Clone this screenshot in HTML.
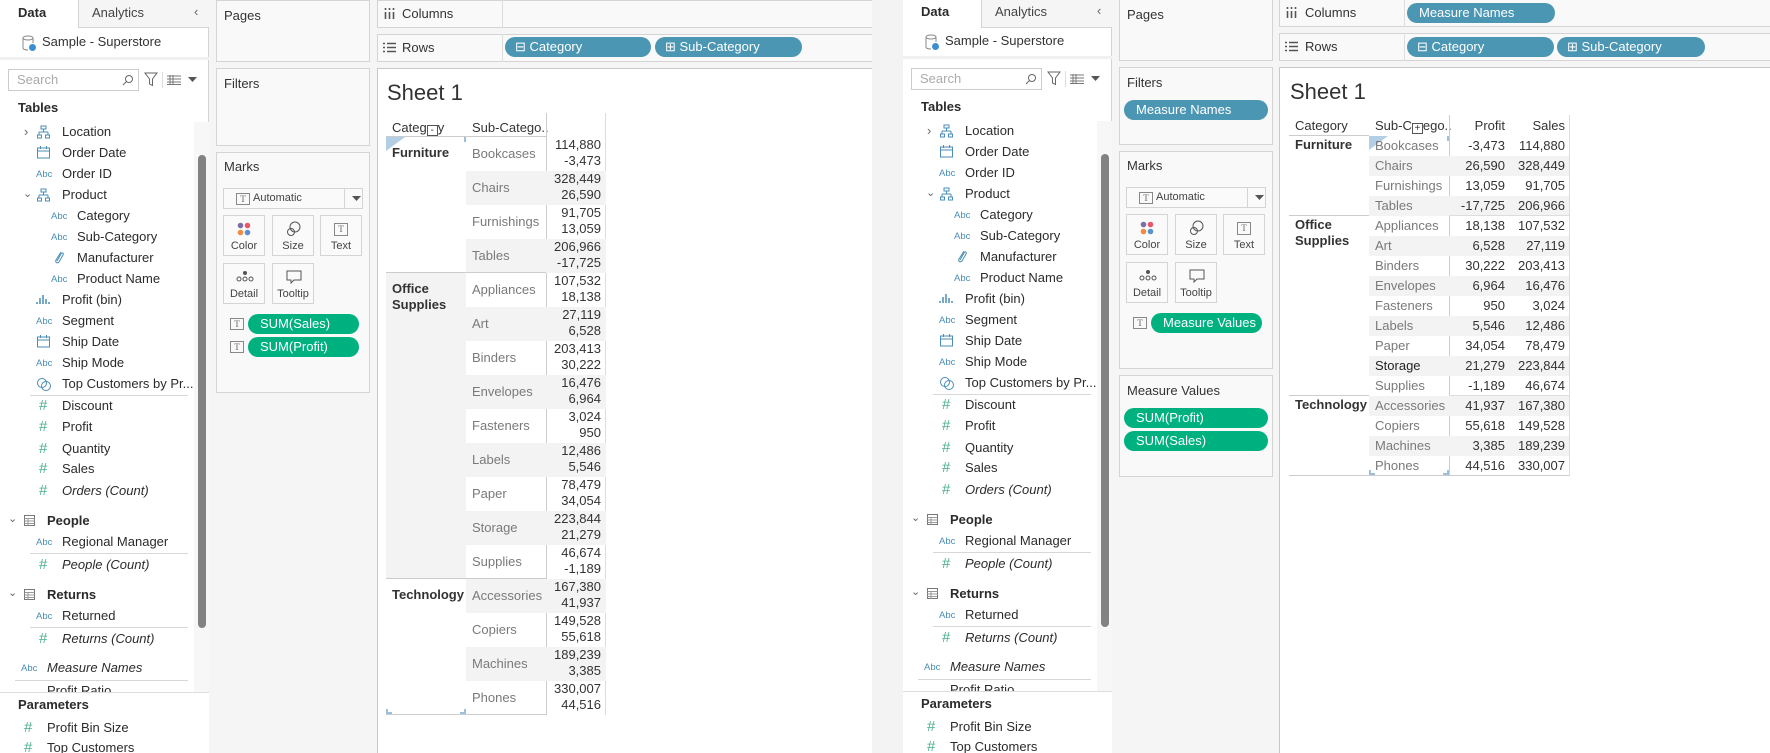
<!DOCTYPE html>
<html><head><meta charset="utf-8"><style>
*{margin:0;padding:0;box-sizing:border-box}
body{width:1770px;height:753px;overflow:hidden;background:#f3f3f3;font-family:"Liberation Sans",sans-serif;color:#2b2b2b;position:relative}
.half{position:absolute;top:0;height:753px;overflow:hidden;background:#f5f5f5}
.a{position:absolute;white-space:nowrap}
.t{position:absolute;white-space:nowrap;font-size:13px;line-height:16px}
.abc{position:absolute;font-size:9.5px;color:#4a8db5;line-height:12px}
.hash{position:absolute;font-size:15px;color:#4bb08c;line-height:16px;font-weight:normal}
.box{position:absolute;background:#f9f9f9;border:1px solid #d4d4d4}
.pill{position:absolute;border-radius:11px;color:#fff;font-size:13px;line-height:20px;padding-left:12px;white-space:nowrap}
.blue{background:#4b96b3}.green{background:#00b180}
.sep{position:absolute;height:1px;background:#d8d8d8}
.mb{position:absolute;width:42px;height:41px;border:1px solid #d4d4d4;background:#fafafa;font-size:11px;color:#444;text-align:center}
.mb span{position:absolute;left:0;right:0;top:24px}
.ti{position:absolute;width:14px;height:12px;border:1px solid #888;font-size:9px;line-height:10px;text-align:center;color:#666;font-family:"Liberation Serif",serif}
.g{position:absolute;background:#f3f3f3}
.sub{position:absolute;font-size:13px;color:#7a7a7a;white-space:nowrap;line-height:16px}
.v{position:absolute;font-size:13px;color:#333;text-align:right;width:70px;line-height:16px}
.cat{position:absolute;font-size:13px;font-weight:bold;color:#333;line-height:16px;white-space:nowrap}
.bx{display:inline-block;width:11px;height:11px;border:1px solid #555;font-size:10px;line-height:9px;text-align:center;vertical-align:-1px}
.auto{position:absolute;font-size:11px;color:#444;line-height:21px}
</style></head><body>

<!-- ================= LEFT HALF ================= -->
<div class="half" style="left:0;width:872px">
 <div class="a" style="left:0;top:0;width:209px;height:753px;background:#fff;border-right:1px solid #d4d4d4"></div>
 <div class="a" style="left:78px;top:0;width:131px;height:28px;background:#f5f5f5;border-left:1px solid #d4d4d4;border-bottom:1px solid #d4d4d4"></div>
 <div class="t" style="left:18px;top:5px;font-weight:bold">Data</div>
 <div class="t" style="left:92px;top:5px;color:#444">Analytics</div>
 <div class="t" style="left:194px;top:4px;color:#666">&#8249;</div>
 <svg class="a" style="left:21px;top:35px" width="16" height="17"><ellipse cx="7" cy="3" rx="5" ry="2" fill="none" stroke="#888"/><path d="M2 3v10c0 1.5 3 2 5 2M12 3v5" fill="none" stroke="#888"/><circle cx="11.5" cy="12.5" r="3.5" fill="#3b8fd0"/></svg>
 <div class="t" style="left:42px;top:34px;color:#333">Sample - Superstore</div>
 <div class="a" style="left:0;top:57px;width:209px;height:3px;background:#f0f0f0"></div>
 <div class="a" style="left:8px;top:69px;width:131px;height:22px;border:1px solid #ccc;background:#fff"></div>
 <div class="t" style="left:17px;top:72px;color:#aaa">Search</div>
 <svg class="a" style="left:122px;top:74px" width="12" height="12"><circle cx="7" cy="5" r="3.5" fill="none" stroke="#666"/><path d="M4.5 7.5L1 11" stroke="#666"/></svg>
 <svg class="a" style="left:144px;top:72px" width="14" height="15"><path d="M1 1h12L8.5 7v6.5L5.5 12V7z" fill="none" stroke="#666"/></svg>
 <div class="a" style="left:162px;top:72px;width:1px;height:16px;background:#ddd"></div>
 <svg class="a" style="left:167px;top:75px" width="14" height="10"><path d="M0 1h14M0 4h14M0 7h14M0 9.5h14M3 0v10M6 0v10" stroke="#777" stroke-width="1"/></svg>
 <svg class="a" style="left:188px;top:77px" width="9" height="5"><path d="M0 0h9L4.5 5z" fill="#555"/></svg>
 <div class="t" style="left:18px;top:100px;font-weight:bold">Tables</div>
 <div class="a" style="left:194px;top:122px;width:15px;height:570px;background:#f7f7f7"></div>
 <div class="a" style="left:198px;top:155px;width:8px;height:473px;border-radius:4px;background:#828282"></div>

 <div class="t" style="left:24px;top:124px;color:#666">›</div>
 <svg class="a" style="left:37px;top:125px" width="13" height="14"><rect x="4" y="1" width="5" height="3" fill="none" stroke="#4a8db5"/><path d="M6.5 4v3M2 7h9M2 7v3M11 7v3" stroke="#4a8db5" fill="none"/><rect x="0.5" y="10" width="4" height="3" fill="none" stroke="#4a8db5"/><rect x="8.5" y="10" width="4" height="3" fill="none" stroke="#4a8db5"/></svg>
 <div class="t" style="left:62px;top:124px">Location</div>
 <svg class="a" style="left:37px;top:146px" width="13" height="13"><rect x="0.5" y="2" width="12" height="10" fill="none" stroke="#4a8db5"/><path d="M0.5 5h12M3.5 0v3M9.5 0v3" stroke="#4a8db5"/></svg>
 <div class="t" style="left:62px;top:145px">Order Date</div>
 <div class="abc" style="left:36px;top:169px">Abc</div><div class="t" style="left:62px;top:166px">Order ID</div>
 <div class="t" style="left:23px;top:186px;color:#666;font-size:11px">&#8964;</div>
 <svg class="a" style="left:37px;top:188px" width="13" height="14"><rect x="4" y="1" width="5" height="3" fill="none" stroke="#4a8db5"/><path d="M6.5 4v3M2 7h9M2 7v3M11 7v3" stroke="#4a8db5" fill="none"/><rect x="0.5" y="10" width="4" height="3" fill="none" stroke="#4a8db5"/><rect x="8.5" y="10" width="4" height="3" fill="none" stroke="#4a8db5"/></svg>
 <div class="t" style="left:62px;top:187px">Product</div>
 <div class="abc" style="left:51px;top:211px">Abc</div><div class="t" style="left:77px;top:208px">Category</div>
 <div class="abc" style="left:51px;top:232px">Abc</div><div class="t" style="left:77px;top:229px">Sub-Category</div>
 <svg class="a" style="left:54px;top:250px" width="10" height="15"><path d="M7 2L2 10c-1 2 1 4 3 2l4-7c1-2-1-3-2-1L3 11" fill="none" stroke="#4a8db5"/></svg>
 <div class="t" style="left:77px;top:250px">Manufacturer</div>
 <div class="abc" style="left:51px;top:274px">Abc</div><div class="t" style="left:77px;top:271px">Product Name</div>
 <svg class="a" style="left:36px;top:294px" width="14" height="10"><path d="M1 8v2M4 4v6M7 1v9M10 5v5M13 8v2" stroke="#4a8db5" stroke-width="1.5"/></svg>
 <div class="t" style="left:62px;top:292px">Profit (bin)</div>
 <div class="abc" style="left:36px;top:316px">Abc</div><div class="t" style="left:62px;top:313px">Segment</div>
 <svg class="a" style="left:37px;top:335px" width="13" height="13"><rect x="0.5" y="2" width="12" height="10" fill="none" stroke="#4a8db5"/><path d="M0.5 5h12M3.5 0v3M9.5 0v3" stroke="#4a8db5"/></svg>
 <div class="t" style="left:62px;top:334px">Ship Date</div>
 <div class="abc" style="left:36px;top:358px">Abc</div><div class="t" style="left:62px;top:355px">Ship Mode</div>
 <svg class="a" style="left:36px;top:377px" width="16" height="14"><circle cx="6" cy="6" r="4.5" fill="none" stroke="#4a8db5"/><circle cx="10" cy="9" r="4.5" fill="none" stroke="#4a8db5"/></svg>
 <div class="t" style="left:62px;top:376px">Top Customers by Pr...</div>
 <div class="sep" style="left:30px;top:395px;width:158px"></div>
 <div class="hash" style="left:39px;top:398px">#</div><div class="t" style="left:62px;top:398px">Discount</div>
 <div class="hash" style="left:39px;top:419px">#</div><div class="t" style="left:62px;top:419px">Profit</div>
 <div class="hash" style="left:39px;top:441px">#</div><div class="t" style="left:62px;top:441px">Quantity</div>
 <div class="hash" style="left:39px;top:461px">#</div><div class="t" style="left:62px;top:461px">Sales</div>
 <div class="hash" style="left:39px;top:483px">#</div><div class="t" style="left:62px;top:483px;font-style:italic">Orders (Count)</div>
 <div class="t" style="left:8px;top:511px;color:#666;font-size:11px">&#8964;</div>
 <svg class="a" style="left:24px;top:515px" width="11" height="11"><rect x="0.5" y="0.5" width="10" height="10" fill="none" stroke="#777"/><path d="M0.5 3.5h10M0.5 6h10M0.5 8.5h10M4 3.5v7" stroke="#999"/></svg>
 <div class="t" style="left:47px;top:513px;font-weight:bold">People</div>
 <div class="abc" style="left:36px;top:537px">Abc</div><div class="t" style="left:62px;top:534px">Regional Manager</div>
 <div class="sep" style="left:30px;top:553px;width:158px"></div>
 <div class="hash" style="left:39px;top:557px">#</div><div class="t" style="left:62px;top:557px;font-style:italic">People (Count)</div>
 <div class="t" style="left:8px;top:585px;color:#666;font-size:11px">&#8964;</div>
 <svg class="a" style="left:24px;top:589px" width="11" height="11"><rect x="0.5" y="0.5" width="10" height="10" fill="none" stroke="#777"/><path d="M0.5 3.5h10M0.5 6h10M0.5 8.5h10M4 3.5v7" stroke="#999"/></svg>
 <div class="t" style="left:47px;top:587px;font-weight:bold">Returns</div>
 <div class="abc" style="left:36px;top:611px">Abc</div><div class="t" style="left:62px;top:608px">Returned</div>
 <div class="sep" style="left:30px;top:627px;width:158px"></div>
 <div class="hash" style="left:39px;top:631px">#</div><div class="t" style="left:62px;top:631px;font-style:italic">Returns (Count)</div>
 <div class="abc" style="left:21px;top:663px">Abc</div><div class="t" style="left:47px;top:660px;font-style:italic">Measure Names</div>
 <div class="sep" style="left:15px;top:680px;width:173px"></div>
 <div class="t" style="left:47px;top:683px">Profit Ratio</div>
 <div class="a" style="left:0;top:692px;width:209px;height:61px;background:#fff;border-top:1px solid #ddd"></div>
 <div class="t" style="left:18px;top:697px;font-weight:bold">Parameters</div>
 <div class="hash" style="left:24px;top:720px">#</div><div class="t" style="left:47px;top:720px">Profit Bin Size</div>
 <div class="hash" style="left:24px;top:740px">#</div><div class="t" style="left:47px;top:740px">Top Customers</div>

 <div class="box" style="left:216px;top:0;width:154px;height:62px"></div>
 <div class="t" style="left:224px;top:8px;color:#333">Pages</div>
 <div class="box" style="left:216px;top:68px;width:154px;height:78px"></div>
 <div class="t" style="left:224px;top:76px;color:#333">Filters</div>
 <div class="box" style="left:216px;top:152px;width:154px;height:241px"></div>
 <div class="t" style="left:224px;top:159px;color:#333">Marks</div>
 <div class="a" style="left:223px;top:188px;width:140px;height:21px;border:1px solid #d4d4d4;background:#fafafa"></div>
 <div class="a" style="left:344px;top:188px;width:1px;height:21px;background:#d4d4d4"></div>
 <svg class="a" style="left:352px;top:196px" width="9" height="5"><path d="M0 0h9L4.5 5z" fill="#555"/></svg>
 <div class="ti" style="left:236px;top:193px">T</div>
 <div class="auto" style="left:253px;top:188px">Automatic</div>
 <div class="mb" style="left:223px;top:215px"><svg style="position:absolute;left:13px;top:6px" width="14" height="14"><circle cx="3.5" cy="3.5" r="2.8" fill="#7b6ea6"/><circle cx="10.5" cy="3.5" r="2.8" fill="#e8566a"/><circle cx="3.5" cy="10.5" r="2.8" fill="#f08c40"/><circle cx="10.5" cy="10.5" r="2.8" fill="#5a8fd0"/></svg><span>Color</span></div>
 <div class="mb" style="left:272px;top:215px"><svg style="position:absolute;left:13px;top:5px" width="16" height="16"><circle cx="9" cy="6" r="5" fill="none" stroke="#555"/><circle cx="5" cy="11" r="3.5" fill="none" stroke="#555"/></svg><span>Size</span></div>
 <div class="mb" style="left:320px;top:215px"><div class="ti" style="left:13px;top:7px;width:14px;height:13px">T</div><span>Text</span></div>
 <div class="mb" style="left:223px;top:263px"><svg style="position:absolute;left:11px;top:6px" width="20" height="12"><circle cx="10" cy="3" r="2" fill="#555"/><circle cx="4" cy="9" r="2" fill="none" stroke="#555"/><circle cx="10" cy="9" r="2" fill="none" stroke="#555"/><circle cx="16" cy="9" r="2" fill="none" stroke="#555"/></svg><span>Detail</span></div>
 <div class="mb" style="left:272px;top:263px"><svg style="position:absolute;left:13px;top:6px" width="16" height="14"><path d="M1 1h14v9H8l-3 3v-3H1z" fill="none" stroke="#555"/></svg><span>Tooltip</span></div>
 <div class="ti" style="left:230px;top:318px">T</div>
 <div class="pill green" style="left:248px;top:314px;width:111px">SUM(Sales)</div>
 <div class="ti" style="left:230px;top:341px">T</div>
 <div class="pill green" style="left:248px;top:337px;width:111px">SUM(Profit)</div>

 <div class="box" style="left:377px;top:0;width:500px;height:28px"></div>
 <div class="a" style="left:502px;top:0;width:1px;height:28px;background:#ddd"></div>
 <svg class="a" style="left:384px;top:8px" width="11" height="11"><path d="M1.5 0v2M1.5 4v7M5.5 0v2M5.5 4v7M9.5 0v2M9.5 4v7" stroke="#555" stroke-width="1.6"/></svg>
 <div class="t" style="left:402px;top:6px;color:#333">Columns</div>
 <div class="box" style="left:377px;top:34px;width:500px;height:28px"></div>
 <div class="a" style="left:502px;top:34px;width:1px;height:28px;background:#ddd"></div>
 <svg class="a" style="left:383px;top:42px" width="13" height="11"><path d="M0 1.5h2M4 1.5h9M0 5.5h2M4 5.5h9M0 9.5h2M4 9.5h9" stroke="#555" stroke-width="1.4"/></svg>
 <div class="t" style="left:402px;top:40px;color:#333">Rows</div>
 <div class="pill blue" style="left:505px;top:37px;width:146px;padding-left:10px">&#8863; Category</div>
 <div class="pill blue" style="left:655px;top:37px;width:147px;padding-left:10px">&#8862; Sub-Category</div>

 <div class="a" style="left:377px;top:68px;width:500px;height:690px;background:#fff;border:1px solid #c8c8c8"></div>
 <div class="a" style="left:387px;top:80px;font-size:22px;color:#333">Sheet 1</div>
 <div class="cat" style="left:392px;top:120px;font-weight:normal">Categ<span class="bx">-</span>y</div>
 <div class="cat" style="left:472px;top:120px;font-weight:normal">Sub-Catego..</div>
 <div class="a" style="left:386px;top:136px;width:160px;height:1px;background:#ccc"></div>
 <div class="a" style="left:546px;top:113px;width:1px;height:602px;background:#ccc"></div>
 <div class="a" style="left:605px;top:113px;width:1px;height:602px;background:#ddd"></div>
 <div class="g" style="left:386px;top:273px;width:80px;height:306px"></div>
 <div class="g" style="left:466px;top:171px;width:140px;height:34px"></div>
 <div class="g" style="left:466px;top:239px;width:140px;height:34px"></div>
 <div class="g" style="left:466px;top:307px;width:140px;height:34px"></div>
 <div class="g" style="left:466px;top:375px;width:140px;height:34px"></div>
 <div class="g" style="left:466px;top:443px;width:140px;height:34px"></div>
 <div class="g" style="left:466px;top:511px;width:140px;height:34px"></div>
 <div class="g" style="left:466px;top:579px;width:140px;height:34px"></div>
 <div class="g" style="left:466px;top:647px;width:140px;height:34px"></div>
 <div class="a" style="left:386px;top:272px;width:160px;height:1px;background:#ccc"></div>
 <div class="a" style="left:386px;top:578px;width:160px;height:1px;background:#ccc"></div>
 <div class="a" style="left:386px;top:714px;width:160px;height:1px;background:#ccc"></div>
 <svg class="a" style="left:386px;top:137px" width="20" height="15"><path d="M0 0h19L0 14z" fill="#b3cfe6"/></svg>
 <div class="a" style="left:464px;top:137px;width:2px;height:5px;background:#9dbfdc"></div>
 <div class="a" style="left:386px;top:709px;width:2px;height:5px;background:#9dbfdc"></div><div class="a" style="left:386px;top:712px;width:6px;height:2px;background:#9dbfdc"></div>
 <div class="a" style="left:464px;top:709px;width:2px;height:5px;background:#9dbfdc"></div><div class="a" style="left:460px;top:712px;width:6px;height:2px;background:#9dbfdc"></div>
 <div class="cat" style="left:392px;top:145px">Furniture</div>
 <div class="cat" style="left:392px;top:281px">Office<br>Supplies</div>
 <div class="cat" style="left:392px;top:587px">Technology</div>
 <div class="sub" style="left:472px;top:146px">Bookcases</div><div class="v" style="left:531px;top:137px">114,880</div><div class="v" style="left:531px;top:153px">-3,473</div>
 <div class="sub" style="left:472px;top:180px">Chairs</div><div class="v" style="left:531px;top:171px">328,449</div><div class="v" style="left:531px;top:187px">26,590</div>
 <div class="sub" style="left:472px;top:214px">Furnishings</div><div class="v" style="left:531px;top:205px">91,705</div><div class="v" style="left:531px;top:221px">13,059</div>
 <div class="sub" style="left:472px;top:248px">Tables</div><div class="v" style="left:531px;top:239px">206,966</div><div class="v" style="left:531px;top:255px">-17,725</div>
 <div class="sub" style="left:472px;top:282px">Appliances</div><div class="v" style="left:531px;top:273px">107,532</div><div class="v" style="left:531px;top:289px">18,138</div>
 <div class="sub" style="left:472px;top:316px">Art</div><div class="v" style="left:531px;top:307px">27,119</div><div class="v" style="left:531px;top:323px">6,528</div>
 <div class="sub" style="left:472px;top:350px">Binders</div><div class="v" style="left:531px;top:341px">203,413</div><div class="v" style="left:531px;top:357px">30,222</div>
 <div class="sub" style="left:472px;top:384px">Envelopes</div><div class="v" style="left:531px;top:375px">16,476</div><div class="v" style="left:531px;top:391px">6,964</div>
 <div class="sub" style="left:472px;top:418px">Fasteners</div><div class="v" style="left:531px;top:409px">3,024</div><div class="v" style="left:531px;top:425px">950</div>
 <div class="sub" style="left:472px;top:452px">Labels</div><div class="v" style="left:531px;top:443px">12,486</div><div class="v" style="left:531px;top:459px">5,546</div>
 <div class="sub" style="left:472px;top:486px">Paper</div><div class="v" style="left:531px;top:477px">78,479</div><div class="v" style="left:531px;top:493px">34,054</div>
 <div class="sub" style="left:472px;top:520px">Storage</div><div class="v" style="left:531px;top:511px">223,844</div><div class="v" style="left:531px;top:527px">21,279</div>
 <div class="sub" style="left:472px;top:554px">Supplies</div><div class="v" style="left:531px;top:545px">46,674</div><div class="v" style="left:531px;top:561px">-1,189</div>
 <div class="sub" style="left:472px;top:588px">Accessories</div><div class="v" style="left:531px;top:579px">167,380</div><div class="v" style="left:531px;top:595px">41,937</div>
 <div class="sub" style="left:472px;top:622px">Copiers</div><div class="v" style="left:531px;top:613px">149,528</div><div class="v" style="left:531px;top:629px">55,618</div>
 <div class="sub" style="left:472px;top:656px">Machines</div><div class="v" style="left:531px;top:647px">189,239</div><div class="v" style="left:531px;top:663px">3,385</div>
 <div class="sub" style="left:472px;top:690px">Phones</div><div class="v" style="left:531px;top:681px">330,007</div><div class="v" style="left:531px;top:697px">44,516</div>
</div>

<!-- ================= RIGHT HALF ================= -->
<div class="half" style="left:903px;width:867px">
 <div class="a" style="left:0;top:0;width:209px;height:753px;background:#fff;border-right:1px solid #d4d4d4"></div>
 <div class="a" style="left:78px;top:0;width:131px;height:28px;background:#f5f5f5;border-left:1px solid #d4d4d4;border-bottom:1px solid #d4d4d4"></div>
 <div class="t" style="left:18px;top:4px;font-weight:bold">Data</div>
 <div class="t" style="left:92px;top:4px;color:#444">Analytics</div>
 <div class="t" style="left:194px;top:3px;color:#666">&#8249;</div>
 <svg class="a" style="left:21px;top:34px" width="16" height="17"><ellipse cx="7" cy="3" rx="5" ry="2" fill="none" stroke="#888"/><path d="M2 3v10c0 1.5 3 2 5 2M12 3v5" fill="none" stroke="#888"/><circle cx="11.5" cy="12.5" r="3.5" fill="#3b8fd0"/></svg>
 <div class="t" style="left:42px;top:33px;color:#333">Sample - Superstore</div>
 <div class="a" style="left:0;top:56px;width:209px;height:3px;background:#f0f0f0"></div>
 <div class="a" style="left:8px;top:68px;width:131px;height:22px;border:1px solid #ccc;background:#fff"></div>
 <div class="t" style="left:17px;top:71px;color:#aaa">Search</div>
 <svg class="a" style="left:122px;top:73px" width="12" height="12"><circle cx="7" cy="5" r="3.5" fill="none" stroke="#666"/><path d="M4.5 7.5L1 11" stroke="#666"/></svg>
 <svg class="a" style="left:144px;top:71px" width="14" height="15"><path d="M1 1h12L8.5 7v6.5L5.5 12V7z" fill="none" stroke="#666"/></svg>
 <div class="a" style="left:162px;top:71px;width:1px;height:16px;background:#ddd"></div>
 <svg class="a" style="left:167px;top:74px" width="14" height="10"><path d="M0 1h14M0 4h14M0 7h14M0 9.5h14M3 0v10M6 0v10" stroke="#777"/></svg>
 <svg class="a" style="left:188px;top:76px" width="9" height="5"><path d="M0 0h9L4.5 5z" fill="#555"/></svg>
 <div class="t" style="left:18px;top:99px;font-weight:bold">Tables</div>
 <div class="a" style="left:194px;top:121px;width:15px;height:570px;background:#f7f7f7"></div>
 <div class="a" style="left:198px;top:154px;width:8px;height:473px;border-radius:4px;background:#828282"></div>

 <div class="t" style="left:24px;top:123px;color:#666">›</div>
 <svg class="a" style="left:37px;top:124px" width="13" height="14"><rect x="4" y="1" width="5" height="3" fill="none" stroke="#4a8db5"/><path d="M6.5 4v3M2 7h9M2 7v3M11 7v3" stroke="#4a8db5" fill="none"/><rect x="0.5" y="10" width="4" height="3" fill="none" stroke="#4a8db5"/><rect x="8.5" y="10" width="4" height="3" fill="none" stroke="#4a8db5"/></svg>
 <div class="t" style="left:62px;top:123px">Location</div>
 <svg class="a" style="left:37px;top:145px" width="13" height="13"><rect x="0.5" y="2" width="12" height="10" fill="none" stroke="#4a8db5"/><path d="M0.5 5h12M3.5 0v3M9.5 0v3" stroke="#4a8db5"/></svg>
 <div class="t" style="left:62px;top:144px">Order Date</div>
 <div class="abc" style="left:36px;top:168px">Abc</div><div class="t" style="left:62px;top:165px">Order ID</div>
 <div class="t" style="left:23px;top:185px;color:#666;font-size:11px">&#8964;</div>
 <svg class="a" style="left:37px;top:187px" width="13" height="14"><rect x="4" y="1" width="5" height="3" fill="none" stroke="#4a8db5"/><path d="M6.5 4v3M2 7h9M2 7v3M11 7v3" stroke="#4a8db5" fill="none"/><rect x="0.5" y="10" width="4" height="3" fill="none" stroke="#4a8db5"/><rect x="8.5" y="10" width="4" height="3" fill="none" stroke="#4a8db5"/></svg>
 <div class="t" style="left:62px;top:186px">Product</div>
 <div class="abc" style="left:51px;top:210px">Abc</div><div class="t" style="left:77px;top:207px">Category</div>
 <div class="abc" style="left:51px;top:231px">Abc</div><div class="t" style="left:77px;top:228px">Sub-Category</div>
 <svg class="a" style="left:54px;top:249px" width="10" height="15"><path d="M7 2L2 10c-1 2 1 4 3 2l4-7c1-2-1-3-2-1L3 11" fill="none" stroke="#4a8db5"/></svg>
 <div class="t" style="left:77px;top:249px">Manufacturer</div>
 <div class="abc" style="left:51px;top:273px">Abc</div><div class="t" style="left:77px;top:270px">Product Name</div>
 <svg class="a" style="left:36px;top:293px" width="14" height="10"><path d="M1 8v2M4 4v6M7 1v9M10 5v5M13 8v2" stroke="#4a8db5" stroke-width="1.5"/></svg>
 <div class="t" style="left:62px;top:291px">Profit (bin)</div>
 <div class="abc" style="left:36px;top:315px">Abc</div><div class="t" style="left:62px;top:312px">Segment</div>
 <svg class="a" style="left:37px;top:334px" width="13" height="13"><rect x="0.5" y="2" width="12" height="10" fill="none" stroke="#4a8db5"/><path d="M0.5 5h12M3.5 0v3M9.5 0v3" stroke="#4a8db5"/></svg>
 <div class="t" style="left:62px;top:333px">Ship Date</div>
 <div class="abc" style="left:36px;top:357px">Abc</div><div class="t" style="left:62px;top:354px">Ship Mode</div>
 <svg class="a" style="left:36px;top:376px" width="16" height="14"><circle cx="6" cy="6" r="4.5" fill="none" stroke="#4a8db5"/><circle cx="10" cy="9" r="4.5" fill="none" stroke="#4a8db5"/></svg>
 <div class="t" style="left:62px;top:375px">Top Customers by Pr...</div>
 <div class="sep" style="left:30px;top:394px;width:158px"></div>
 <div class="hash" style="left:39px;top:397px">#</div><div class="t" style="left:62px;top:397px">Discount</div>
 <div class="hash" style="left:39px;top:418px">#</div><div class="t" style="left:62px;top:418px">Profit</div>
 <div class="hash" style="left:39px;top:440px">#</div><div class="t" style="left:62px;top:440px">Quantity</div>
 <div class="hash" style="left:39px;top:460px">#</div><div class="t" style="left:62px;top:460px">Sales</div>
 <div class="hash" style="left:39px;top:482px">#</div><div class="t" style="left:62px;top:482px;font-style:italic">Orders (Count)</div>
 <div class="t" style="left:8px;top:510px;color:#666;font-size:11px">&#8964;</div>
 <svg class="a" style="left:24px;top:514px" width="11" height="11"><rect x="0.5" y="0.5" width="10" height="10" fill="none" stroke="#777"/><path d="M0.5 3.5h10M0.5 6h10M0.5 8.5h10M4 3.5v7" stroke="#999"/></svg>
 <div class="t" style="left:47px;top:512px;font-weight:bold">People</div>
 <div class="abc" style="left:36px;top:536px">Abc</div><div class="t" style="left:62px;top:533px">Regional Manager</div>
 <div class="sep" style="left:30px;top:552px;width:158px"></div>
 <div class="hash" style="left:39px;top:556px">#</div><div class="t" style="left:62px;top:556px;font-style:italic">People (Count)</div>
 <div class="t" style="left:8px;top:584px;color:#666;font-size:11px">&#8964;</div>
 <svg class="a" style="left:24px;top:588px" width="11" height="11"><rect x="0.5" y="0.5" width="10" height="10" fill="none" stroke="#777"/><path d="M0.5 3.5h10M0.5 6h10M0.5 8.5h10M4 3.5v7" stroke="#999"/></svg>
 <div class="t" style="left:47px;top:586px;font-weight:bold">Returns</div>
 <div class="abc" style="left:36px;top:610px">Abc</div><div class="t" style="left:62px;top:607px">Returned</div>
 <div class="sep" style="left:30px;top:626px;width:158px"></div>
 <div class="hash" style="left:39px;top:630px">#</div><div class="t" style="left:62px;top:630px;font-style:italic">Returns (Count)</div>
 <div class="abc" style="left:21px;top:662px">Abc</div><div class="t" style="left:47px;top:659px;font-style:italic">Measure Names</div>
 <div class="sep" style="left:15px;top:679px;width:173px"></div>
 <div class="t" style="left:47px;top:682px">Profit Ratio</div>
 <div class="a" style="left:0;top:691px;width:209px;height:62px;background:#fff;border-top:1px solid #ddd"></div>
 <div class="t" style="left:18px;top:696px;font-weight:bold">Parameters</div>
 <div class="hash" style="left:24px;top:719px">#</div><div class="t" style="left:47px;top:719px">Profit Bin Size</div>
 <div class="hash" style="left:24px;top:739px">#</div><div class="t" style="left:47px;top:739px">Top Customers</div>

 <div class="box" style="left:216px;top:-1px;width:154px;height:62px"></div>
 <div class="t" style="left:224px;top:7px;color:#333">Pages</div>
 <div class="box" style="left:216px;top:67px;width:154px;height:78px"></div>
 <div class="t" style="left:224px;top:75px;color:#333">Filters</div>
 <div class="pill blue" style="left:221px;top:100px;width:144px">Measure Names</div>
 <div class="box" style="left:216px;top:151px;width:154px;height:218px"></div>
 <div class="t" style="left:224px;top:158px;color:#333">Marks</div>
 <div class="a" style="left:223px;top:187px;width:140px;height:21px;border:1px solid #d4d4d4;background:#fafafa"></div>
 <div class="a" style="left:344px;top:187px;width:1px;height:21px;background:#d4d4d4"></div>
 <svg class="a" style="left:352px;top:195px" width="9" height="5"><path d="M0 0h9L4.5 5z" fill="#555"/></svg>
 <div class="ti" style="left:236px;top:192px">T</div>
 <div class="auto" style="left:253px;top:187px">Automatic</div>
 <div class="mb" style="left:223px;top:214px"><svg style="position:absolute;left:13px;top:6px" width="14" height="14"><circle cx="3.5" cy="3.5" r="2.8" fill="#7b6ea6"/><circle cx="10.5" cy="3.5" r="2.8" fill="#e8566a"/><circle cx="3.5" cy="10.5" r="2.8" fill="#f08c40"/><circle cx="10.5" cy="10.5" r="2.8" fill="#5a8fd0"/></svg><span>Color</span></div>
 <div class="mb" style="left:272px;top:214px"><svg style="position:absolute;left:13px;top:5px" width="16" height="16"><circle cx="9" cy="6" r="5" fill="none" stroke="#555"/><circle cx="5" cy="11" r="3.5" fill="none" stroke="#555"/></svg><span>Size</span></div>
 <div class="mb" style="left:320px;top:214px"><div class="ti" style="left:13px;top:7px;width:14px;height:13px">T</div><span>Text</span></div>
 <div class="mb" style="left:223px;top:262px"><svg style="position:absolute;left:11px;top:6px" width="20" height="12"><circle cx="10" cy="3" r="2" fill="#555"/><circle cx="4" cy="9" r="2" fill="none" stroke="#555"/><circle cx="10" cy="9" r="2" fill="none" stroke="#555"/><circle cx="16" cy="9" r="2" fill="none" stroke="#555"/></svg><span>Detail</span></div>
 <div class="mb" style="left:272px;top:262px"><svg style="position:absolute;left:13px;top:6px" width="16" height="14"><path d="M1 1h14v9H8l-3 3v-3H1z" fill="none" stroke="#555"/></svg><span>Tooltip</span></div>
 <div class="ti" style="left:230px;top:317px">T</div>
 <div class="pill green" style="left:248px;top:313px;width:111px">Measure Values</div>
 <div class="box" style="left:216px;top:375px;width:154px;height:102px"></div>
 <div class="t" style="left:224px;top:383px;color:#333">Measure Values</div>
 <div class="pill green" style="left:221px;top:408px;width:144px">SUM(Profit)</div>
 <div class="pill green" style="left:221px;top:431px;width:144px">SUM(Sales)</div>

 <div class="box" style="left:376px;top:-1px;width:500px;height:28px"></div>
 <div class="a" style="left:501px;top:0;width:1px;height:27px;background:#ddd"></div>
 <svg class="a" style="left:383px;top:7px" width="11" height="11"><path d="M1.5 0v2M1.5 4v7M5.5 0v2M5.5 4v7M9.5 0v2M9.5 4v7" stroke="#555" stroke-width="1.6"/></svg>
 <div class="t" style="left:402px;top:5px;color:#333">Columns</div>
 <div class="pill blue" style="left:504px;top:3px;width:148px;border-radius:10px">Measure Names</div>
 <div class="box" style="left:376px;top:33px;width:500px;height:28px"></div>
 <div class="a" style="left:501px;top:33px;width:1px;height:28px;background:#ddd"></div>
 <svg class="a" style="left:382px;top:41px" width="13" height="11"><path d="M0 1.5h2M4 1.5h9M0 5.5h2M4 5.5h9M0 9.5h2M4 9.5h9" stroke="#555" stroke-width="1.4"/></svg>
 <div class="t" style="left:402px;top:39px;color:#333">Rows</div>
 <div class="pill blue" style="left:504px;top:37px;width:147px;padding-left:10px;border-radius:10px">&#8863; Category</div>
 <div class="pill blue" style="left:654px;top:37px;width:148px;padding-left:10px;border-radius:10px">&#8862; Sub-Category</div>

 <div class="a" style="left:376px;top:67px;width:500px;height:690px;background:#fff;border:1px solid #c8c8c8"></div>
 <div class="a" style="left:387px;top:79px;font-size:22px;color:#333">Sheet 1</div>
 <div class="cat" style="left:392px;top:118px;font-weight:normal">Category</div>
 <div class="cat" style="left:472px;top:118px;font-weight:normal">Sub-C<span class="bx">+</span>ego..</div>
 <div class="cat" style="left:562px;top:118px;width:40px;text-align:right;font-weight:normal">Profit</div>
 <div class="cat" style="left:622px;top:118px;width:40px;text-align:right;font-weight:normal">Sales</div>
 <div class="a" style="left:386px;top:135px;width:80px;height:1px;background:#ccc"></div>
 <div class="a" style="left:546px;top:115px;width:1px;height:361px;background:#ccc"></div>
 <div class="a" style="left:666px;top:115px;width:1px;height:361px;background:#ddd"></div>
 <div class="g" style="left:466px;top:156px;width:200px;height:20px"></div>
 <div class="g" style="left:466px;top:196px;width:200px;height:20px"></div>
 <div class="g" style="left:466px;top:236px;width:200px;height:20px"></div>
 <div class="g" style="left:466px;top:276px;width:200px;height:20px"></div>
 <div class="g" style="left:466px;top:316px;width:200px;height:20px"></div>
 <div class="g" style="left:466px;top:356px;width:200px;height:20px"></div>
 <div class="g" style="left:466px;top:396px;width:200px;height:20px"></div>
 <div class="g" style="left:466px;top:436px;width:200px;height:20px"></div>
 <div class="a" style="left:386px;top:215px;width:80px;height:1px;background:#ccc"></div>
 <div class="a" style="left:546px;top:215px;width:120px;height:1px;background:#ddd"></div>
 <div class="a" style="left:386px;top:395px;width:80px;height:1px;background:#ccc"></div>
 <div class="a" style="left:546px;top:395px;width:120px;height:1px;background:#ddd"></div>
 <div class="a" style="left:386px;top:475px;width:280px;height:1px;background:#ccc"></div>
 <svg class="a" style="left:466px;top:136px" width="20" height="15"><path d="M0 0h19L0 14z" fill="#b3cfe6"/></svg>
 <div class="a" style="left:544px;top:136px;width:2px;height:5px;background:#9dbfdc"></div>
 <div class="a" style="left:466px;top:470px;width:2px;height:5px;background:#9dbfdc"></div><div class="a" style="left:466px;top:473px;width:6px;height:2px;background:#9dbfdc"></div>
 <div class="a" style="left:544px;top:470px;width:2px;height:5px;background:#9dbfdc"></div><div class="a" style="left:540px;top:473px;width:6px;height:2px;background:#9dbfdc"></div>
 <div class="cat" style="left:392px;top:137px">Furniture</div>
 <div class="cat" style="left:392px;top:217px">Office<br>Supplies</div>
 <div class="cat" style="left:392px;top:397px">Technology</div>

 <div class="sub" style="left:472px;top:138px">Bookcases</div><div class="v" style="left:532px;top:138px">-3,473</div><div class="v" style="left:592px;top:138px">114,880</div>
 <div class="sub" style="left:472px;top:158px">Chairs</div><div class="v" style="left:532px;top:158px">26,590</div><div class="v" style="left:592px;top:158px">328,449</div>
 <div class="sub" style="left:472px;top:178px">Furnishings</div><div class="v" style="left:532px;top:178px">13,059</div><div class="v" style="left:592px;top:178px">91,705</div>
 <div class="sub" style="left:472px;top:198px">Tables</div><div class="v" style="left:532px;top:198px">-17,725</div><div class="v" style="left:592px;top:198px">206,966</div>
 <div class="sub" style="left:472px;top:218px">Appliances</div><div class="v" style="left:532px;top:218px">18,138</div><div class="v" style="left:592px;top:218px">107,532</div>
 <div class="sub" style="left:472px;top:238px">Art</div><div class="v" style="left:532px;top:238px">6,528</div><div class="v" style="left:592px;top:238px">27,119</div>
 <div class="sub" style="left:472px;top:258px">Binders</div><div class="v" style="left:532px;top:258px">30,222</div><div class="v" style="left:592px;top:258px">203,413</div>
 <div class="sub" style="left:472px;top:278px">Envelopes</div><div class="v" style="left:532px;top:278px">6,964</div><div class="v" style="left:592px;top:278px">16,476</div>
 <div class="sub" style="left:472px;top:298px">Fasteners</div><div class="v" style="left:532px;top:298px">950</div><div class="v" style="left:592px;top:298px">3,024</div>
 <div class="sub" style="left:472px;top:318px">Labels</div><div class="v" style="left:532px;top:318px">5,546</div><div class="v" style="left:592px;top:318px">12,486</div>
 <div class="sub" style="left:472px;top:338px">Paper</div><div class="v" style="left:532px;top:338px">34,054</div><div class="v" style="left:592px;top:338px">78,479</div>
 <div class="sub" style="left:472px;top:358px;color:#222">Storage</div><div class="v" style="left:532px;top:358px">21,279</div><div class="v" style="left:592px;top:358px">223,844</div>
 <div class="sub" style="left:472px;top:378px">Supplies</div><div class="v" style="left:532px;top:378px">-1,189</div><div class="v" style="left:592px;top:378px">46,674</div>
 <div class="sub" style="left:472px;top:398px">Accessories</div><div class="v" style="left:532px;top:398px">41,937</div><div class="v" style="left:592px;top:398px">167,380</div>
 <div class="sub" style="left:472px;top:418px">Copiers</div><div class="v" style="left:532px;top:418px">55,618</div><div class="v" style="left:592px;top:418px">149,528</div>
 <div class="sub" style="left:472px;top:438px">Machines</div><div class="v" style="left:532px;top:438px">3,385</div><div class="v" style="left:592px;top:438px">189,239</div>
 <div class="sub" style="left:472px;top:458px">Phones</div><div class="v" style="left:532px;top:458px">44,516</div><div class="v" style="left:592px;top:458px">330,007</div>
</div>
</body></html>
